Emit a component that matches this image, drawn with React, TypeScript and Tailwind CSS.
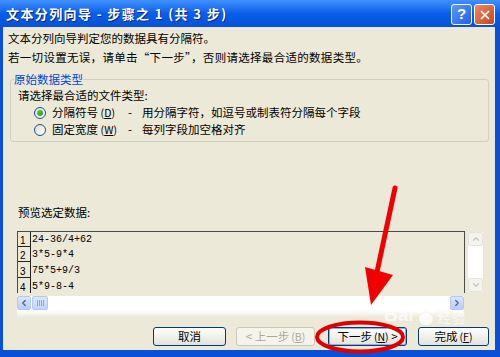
import { ChevronLeft, ChevronRight, ChevronUp, ChevronDown, X } from 'lucide-react';

const ROWS = ['24-36/4+62', '3*5-9*4', '75*5+9/3', '5*9-8-4'];
const ROW_H = ['h-[15px]', 'h-[15px]', 'h-[16px]', 'h-[16px]'];

function Radio({ checked }: { checked?: boolean }) {
  return (
    <div className="w-[12px] h-[12px] rounded-full border border-[#1C5180] bg-gradient-to-br from-[#DCDCD5] to-white flex items-center justify-center">
      {checked && <div className="w-[6px] h-[6px] rounded-full bg-gradient-to-br from-[#55D451] to-[#1E9C1A]" />}
    </div>
  );
}

function XpButton({ children, w, disabled, isDefault }: { children: React.ReactNode; w: string; disabled?: boolean; isDefault?: boolean }) {
  return (
    <div
      className={`${w} h-[19px] rounded-[3px] border flex items-center justify-center ${
        disabled
          ? 'border-[#C9C7BA] bg-[#F5F4EA] text-[#ACA899]'
          : 'border-[#003C74] bg-gradient-to-b from-white to-[#E3E2DA] text-black'
      } ${isDefault ? 'shadow-[inset_0_0_0_1px_#8FADEB]' : ''}`}
    >
      {children}
    </div>
  );
}

export default function App() {
  return (
    <div className="relative w-[500px] h-[357px] flex flex-col bg-[#0A4FD8] font-['Noto_Sans_CJK_SC','Liberation_Sans',sans-serif] text-[11.5px] text-black overflow-hidden">
      {/* Title bar */}
      <div className="h-[27px] flex items-center pl-[6px] pr-[5px] bg-gradient-to-b from-[#3F91FF] via-[#0A5DE8] to-[#0752D8]">
        <span className="text-white font-bold text-[13px] tracking-[1.4px] [text-shadow:1px_1px_0_#0A2A80]">
          文本分列向导 - 步骤之 1 (共 3 步)
        </span>
        <div className="ml-auto flex gap-[2px] mt-[2px]">
          <div className="w-[21px] h-[21px] rounded-[3px] border border-white bg-gradient-to-br from-[#5C98FA] to-[#2260E0] flex items-center justify-center text-white font-bold text-[15px] font-['Liberation_Sans',sans-serif]">
            ?
          </div>
          <div className="w-[21px] h-[21px] rounded-[3px] border border-white bg-gradient-to-br from-[#EC8A62] to-[#C8431B] flex items-center justify-center text-white">
            <X size={14} strokeWidth={3} />
          </div>
        </div>
      </div>

      {/* Body */}
      <div className="flex-1 ml-[3px] mr-[5px] mb-[7px] bg-[#ECE9D8] flex flex-col">
        <div className="mt-[2px] h-[19px] leading-[19px] pl-[5px]">文本分列向导判定您的数据具有分隔符。</div>
        <div className="h-[19px] leading-[19px] pl-[5px] tracking-[0.3px]">若一切设置无误，请单击“下一步”，否则请选择最合适的数据类型。</div>

        {/* Group box */}
        <fieldset className="mt-[5px] ml-[7px] w-[479px] border border-[#D0D0BF] rounded-[3px] px-[3px] pb-[3px]">
          <legend className="px-0 leading-[14px] text-[#0046D5]">原始数据类型</legend>
          <div className="pl-[4px]">
            <div className="h-[18px] leading-[18px]">请选择最合适的文件类型:</div>
            <div className="h-[17px] flex items-center pl-[16px]">
              <Radio checked />
              <span className="ml-[6px] w-[76px]">
                分隔符号 <span className="text-[10.5px]">(<u>D</u>)</span>
              </span>
              <span className="w-[14px]">-</span>
              <span>用分隔字符，如逗号或制表符分隔每个字段</span>
            </div>
            <div className="h-[17px] flex items-center pl-[16px]">
              <Radio />
              <span className="ml-[6px] w-[76px]">
                固定宽度 <span className="text-[10.5px]">(<u>W</u>)</span>
              </span>
              <span className="w-[14px]">-</span>
              <span>每列字段加空格对齐</span>
            </div>
          </div>
        </fieldset>

        <div className="mt-[61px] h-[18px] leading-[18px] pl-[15px]">预览选定数据:</div>

        {/* Preview */}
        <div className="mt-[10px] ml-[14px] flex flex-col">
          <div className="flex">
            <div className="w-[448px] h-[62px] border-t border-l border-r border-[#4A4A4A] overflow-hidden">
              {ROWS.map((r, i) => (
                <div key={r} className={`flex ${ROW_H[i]}`}>
                  <div className="w-[13px] border-r border-b border-[#222] flex items-end pl-[2px] text-[10px] leading-[11px] font-['Liberation_Sans',sans-serif]">
                    {i + 1}
                  </div>
                  <div className="pl-[1px] flex items-end pb-[1px] text-[10px] leading-[12px] font-['Liberation_Mono',monospace]">
                    {r}
                  </div>
                </div>
              ))}
            </div>
            <div className="ml-[3px] mt-[1px] w-[15px] h-[60px] bg-white flex flex-col justify-between">
              <div className="h-[14px] rounded-[2px] border border-[#E4E3DC] bg-[#F4F3EE] flex items-center justify-center text-[#C8C7BE]">
                <ChevronUp size={10} strokeWidth={3} />
              </div>
              <div className="h-[14px] rounded-[2px] border border-[#E4E3DC] bg-[#F4F3EE] flex items-center justify-center text-[#C8C7BE]">
                <ChevronDown size={10} strokeWidth={3} />
              </div>
            </div>
          </div>
          <div className="mt-[3px] w-[447px] h-[14px] bg-white flex">
            <div className="w-[14px] h-[14px] rounded-[2px] border border-[#B4C8F6] bg-gradient-to-b from-[#DCE6FD] to-[#B7CCF9] flex items-center justify-center text-[#4D6185]">
              <ChevronLeft size={10} strokeWidth={3} />
            </div>
            <div className="ml-[1px] w-[16px] h-[14px] rounded-[2px] border border-[#B4C8F6] bg-gradient-to-b from-[#DCE6FD] to-[#C4D5FB] flex items-center justify-center gap-[1px]">
              <div className="w-px h-[6px] bg-[#8EA6E6]" />
              <div className="w-px h-[6px] bg-[#8EA6E6]" />
              <div className="w-px h-[6px] bg-[#8EA6E6]" />
              <div className="w-px h-[6px] bg-[#8EA6E6]" />
            </div>
            <div className="ml-auto w-[14px] h-[14px] rounded-[2px] border border-[#B4C8F6] bg-gradient-to-b from-[#DCE6FD] to-[#B7CCF9] flex items-center justify-center text-[#4D6185]">
              <ChevronRight size={10} strokeWidth={3} />
            </div>
          </div>
          <div className="w-[447px] h-[8px] bg-gradient-to-b from-white to-[#ECE9D8]" />
        </div>

        {/* Buttons */}
        <div className="mt-[9px] flex pl-[150px]">
          <XpButton w="w-[73px]">取消</XpButton>
          <div className="ml-[10px]">
            <XpButton w="w-[79px]" disabled>
              &lt; 上一步 <span className="ml-[2px] text-[10.5px]">(<u>B</u>)</span>
            </XpButton>
          </div>
          <div className="ml-[13px]">
            <XpButton w="w-[79px]" isDefault>
              下一步 <span className="ml-[2px] text-[10.5px]">(<u>N</u>)</span>&nbsp;&gt;
            </XpButton>
          </div>
          <div className="ml-[11px]">
            <XpButton w="w-[71px]">
              完成 <span className="ml-[2px] text-[10.5px]">(<u>F</u>)</span>
            </XpButton>
          </div>
        </div>
      </div>

      {/* Watermark */}
      <div className="absolute left-[384px] top-[302px] flex items-end text-white/70 pointer-events-none">
        <span className="font-bold text-[19px] leading-[22px] font-['Liberation_Sans',sans-serif]">Bai</span>
        <svg width="22" height="24" viewBox="0 0 22 24" className="mx-[1px] opacity-80">
          <circle cx="5" cy="8" r="3" fill="white" />
          <circle cx="11" cy="4" r="3" fill="white" />
          <circle cx="17" cy="8" r="3" fill="white" />
          <ellipse cx="11" cy="17" rx="7" ry="6" fill="white" />
        </svg>
        <span className="text-[14px] leading-[18px]">经验</span>
      </div>

      {/* Red annotation */}
      <svg className="absolute left-0 top-0 pointer-events-none" width="500" height="357" viewBox="0 0 500 357">
        <line x1="395" y1="188" x2="377" y2="272" stroke="#F00000" strokeWidth="5" strokeLinecap="round" />
        <polygon points="365,267 393,275 371,305" fill="#F00000" />
        <ellipse cx="360" cy="337" rx="43" ry="14.5" fill="none" stroke="#E00000" strokeWidth="4" />
      </svg>
    </div>
  );
}
